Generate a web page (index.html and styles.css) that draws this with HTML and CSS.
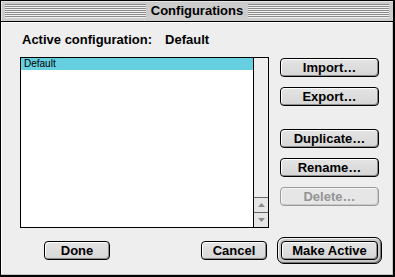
FILE: index.html
```html
<!DOCTYPE html>
<html lang="en">
<head>
  <meta charset="UTF-8" />
  <title>Configurations</title>
  <link rel="stylesheet" href="styles.css">
</head>
<body>
  <div class="window">
    <div class="titlebar">
      <span class="titlebar__stripes"></span>
      <span class="titlebar__title">Configurations</span>
      <span class="titlebar__stripes"></span>
    </div>

    <div class="content">
      <p class="active">
        <span>Active configuration:</span>
        <span class="active__name">Default</span>
      </p>

      <div class="main">
        <!-- configuration list -->
        <div class="list">
          <ul class="list__items">
            <li class="list__item is-selected">Default</li>
          </ul>
          <div class="scrollbar">
            <span class="scrollbar__track"></span>
            <span class="scrollbar__arrow">
              <svg width="7" height="4" viewBox="0 0 7 4"><polygon points="3.5,0 7,4 0,4" fill="#8a8a8a"/></svg>
            </span>
            <span class="scrollbar__arrow">
              <svg width="7" height="4" viewBox="0 0 7 4"><polygon points="0,0 7,0 3.5,4" fill="#8a8a8a"/></svg>
            </span>
          </div>
        </div>

        <div class="side">
          <button class="btn">Import…</button>
          <button class="btn">Export…</button>
          <button class="btn side__gap">Duplicate…</button>
          <button class="btn">Rename…</button>
          <button class="btn" disabled>Delete…</button>
        </div>
      </div>

      <div class="footer">
        <button class="btn btn--small footer__done">Done</button>
        <button class="btn btn--small footer__cancel">Cancel</button>
        <span class="default-ring"><button class="btn btn--wide">Make Active</button></span>
      </div>
    </div>
  </div>
</body>
</html>
```

FILE: styles.css
```css
*{margin:0;padding:0;box-sizing:border-box;}
body{font-family:"Liberation Sans",Arial,sans-serif;background:#fff;}

.window{
  width:395px;height:277px;
  border:1px solid #000;border-right-width:2px;border-bottom-width:2px;
  background:#eeeeee;
  display:flex;flex-direction:column;
}

/* title bar */
.titlebar{
  height:21px;flex:none;
  display:flex;align-items:center;
  padding:0 4px 1px;
  background:#cccccc;
  border-bottom:1px solid #000;
  box-shadow:inset 1px 1px #e6e6e6;
}
.titlebar__stripes{
  flex:1;height:14px;
  background:repeating-linear-gradient(to bottom,#8a8a8a 0 1px,#f2f2f2 1px 2px);
}
.titlebar__title{
  padding:0 5px;
  font-size:13px;font-weight:bold;line-height:16px;color:#000;
}

/* body */
.content{
  flex:1;
  padding:10px 0 0 19px;
  box-shadow:inset -1px -1px #c4c4c4,inset 1px 1px #fff;
}
.active{
  margin-left:2px;
  font-size:13px;font-weight:bold;line-height:16px;
  display:flex;
}
.active__name{margin-left:13px;}

.main{display:flex;gap:11px;margin-top:9px;}

.list{
  width:249px;height:171px;
  border:1px solid #000;background:#fff;
  display:flex;
}
.list__items{flex:1;list-style:none;}
.list__item{
  height:12px;padding-left:3px;
  font-size:10px;line-height:12px;color:#000;
}
.list__item.is-selected{background:#66cfe0;}

.scrollbar{
  width:15px;border-left:1px solid #000;
  display:flex;flex-direction:column;
  background:#eeeeee;
}
.scrollbar__track{flex:1;}
.scrollbar__arrow{
  height:15px;border-top:1px solid #666;
  display:flex;align-items:center;justify-content:center;
  background:#e6e6e6;
}

.side{
  width:99px;padding-top:1px;
  display:flex;flex-direction:column;gap:10px;
}
.side__gap{margin-top:13px;}

/* buttons */
.btn{
  display:block;width:100%;height:19px;
  border:1px solid #000;border-radius:4px;
  background:linear-gradient(#e4e4e4,#d6d6d6);
  box-shadow:inset 1px 1px #fff,inset -1px -1px #8c8c8c;
  font-family:inherit;font-size:13px;font-weight:bold;line-height:16px;
  color:#000;text-align:center;
}
.btn:disabled{
  border-color:#9a9a9a;color:#949494;
  background:#e6e6e6;box-shadow:inset 1px 1px #f6f6f6,inset -1px -1px #c8c8c8;
}
.btn--small{width:66px;}
.btn--wide{width:97px;}

.footer{
  display:flex;align-items:center;
  margin-top:9px;height:27px;
}
.footer__done{margin-left:24px;}
.footer__cancel{margin-left:91px;}
.default-ring{
  margin-left:10px;
  width:105px;height:27px;padding:3px;
  border:1px solid #000;border-radius:7px;
  background:#c8c8c8;
  box-shadow:inset 1px 1px #f4f4f4,inset -1px -1px #777;
}
```
